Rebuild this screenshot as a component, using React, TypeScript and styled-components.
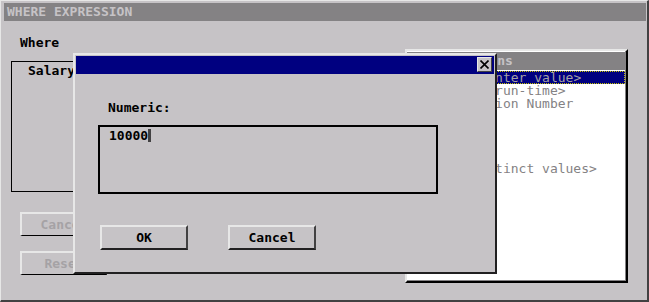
import React from 'react';
import styled, { createGlobalStyle } from 'styled-components';

const GlobalStyle = createGlobalStyle`
  body {
    margin: 0;
    background: #c6c3c6;
    font-family: 'DejaVu Sans Mono', 'Liberation Mono', monospace;
    font-size: 13px;
  }
`;

const columns = [
  { label: '<Enter value>', indent: 9, selected: true },
  { label: '<Ask at run-time>', indent: 3 },
  { label: 'Observation Number', indent: 3 },
  { label: '' },
  { label: '' },
  { label: '' },
  { label: '' },
  { label: '<Lookup distinct values>', indent: 0 },
];

const App: React.FC = () => {
  return (
    <>
      <GlobalStyle />
      <Window>
        <TitleBar>WHERE EXPRESSION</TitleBar>
        <Body>
          <LeftColumn>
            <Label>Where</Label>
            <ExpressionBox>
              <ExprText>Salary</ExprText>
            </ExpressionBox>
            <SideButtons>
              <SideButton disabled>Cancel</SideButton>
              <SideButton disabled>Reset</SideButton>
            </SideButtons>
          </LeftColumn>
          <ListPanel>
            <ListHeader>Columns</ListHeader>
            <ListItems>
              {columns.map((col, i) => (
                <ListItem key={i} $selected={!!col.selected} $indent={col.indent || 0}>
                  {col.label}
                </ListItem>
              ))}
            </ListItems>
          </ListPanel>
        </Body>

        <Dialog>
          <DialogTitle>
            <CloseButton aria-label="close">
              <svg width="9" height="9" viewBox="0 0 9 9">
                <path d="M0.5 0.5 L8.5 8.5 M8.5 0.5 L0.5 8.5" stroke="#000" strokeWidth="1.6" />
              </svg>
            </CloseButton>
          </DialogTitle>
          <DialogBody>
            <FieldLabel>Numeric:</FieldLabel>
            <InputBox>
              <InputText>10000</InputText>
              <Caret />
            </InputBox>
            <DialogButtons>
              <PushButton>OK</PushButton>
              <PushButton>Cancel</PushButton>
            </DialogButtons>
          </DialogBody>
        </Dialog>
      </Window>
    </>
  );
};

export default App;

const Window = styled.div`
  position: relative;
  width: 649px;
  height: 302px;
  box-sizing: border-box;
  border-top: 1px solid #e7e7e7;
  border-left: 1px solid #e7e7e7;
  border-right: 2px solid #424142;
  border-bottom: 2px solid #424142;
  background: #c6c3c6;
  display: flex;
  flex-direction: column;
`;

const TitleBar = styled.div`
  margin: 2px 1px 0 3px;
  height: 18px;
  line-height: 18px;
  padding-left: 3px;
  background: #848284;
  color: #c6c3c6;
  font-weight: bold;
  white-space: pre;
`;

const Body = styled.div`
  display: flex;
  align-items: flex-start;
  gap: 14px;
  padding: 14px 19px 0 10px;
`;

const LeftColumn = styled.div`
  width: 380px;
  display: flex;
  flex-direction: column;
`;

const Label = styled.div`
  margin-left: 9px;
  line-height: 15px;
  font-weight: bold;
  color: #000;
`;

const ExpressionBox = styled.div`
  margin-top: 11px;
  height: 131px;
  box-sizing: border-box;
  border: 1px solid #000;
  padding: 1px 16px;
`;

const ExprText = styled.div`
  line-height: 15px;
  font-weight: bold;
`;

const SideButtons = styled.div`
  margin: 20px 0 0 9px;
  display: flex;
  flex-direction: column;
  gap: 15px;
`;

const SideButton = styled.button`
  width: 87px;
  height: 24px;
  box-sizing: border-box;
  padding: 0;
  font: inherit;
  font-weight: bold;
  background: #c6c3c6;
  color: #a5a2a5;
  border-style: solid;
  border-width: 2px 1px 1px 2px;
  border-color: #e7e7e7 #424142 #000 #e7e7e7;
`;

const ListPanel = styled.div`
  margin-top: 14px;
  width: 223px;
  height: 234px;
  box-sizing: border-box;
  border-style: solid;
  border-width: 2px;
  border-color: #e7e7e7 #000 #000 #e7e7e7;
  background: #fff;
  box-shadow: inset -1px -1px 0 #848284;
  display: flex;
  flex-direction: column;
`;

const ListHeader = styled.div`
  margin-top: 1px;
  height: 18px;
  line-height: 18px;
  padding-left: 51px;
  margin-right: 1px;
  background: #848284;
  color: #c6c3c6;
  font-weight: bold;
`;

const ListItems = styled.div`
  padding-top: 1px;
  display: flex;
  flex-direction: column;
`;

const ListItem = styled.div<{ $selected: boolean; $indent: number }>`
  height: 13px;
  line-height: 13px;
  margin-right: 1px;
  box-sizing: border-box;
  padding-left: ${(p) => 2 + p.$indent * 7.83}px;
  white-space: pre;
  color: ${(p) => (p.$selected ? '#a5a2a5' : '#848284')};
  background: ${(p) => (p.$selected ? '#000080' : 'transparent')};
  outline: ${(p) => (p.$selected ? '1px dotted #c6c300' : 'none')};
  outline-offset: -1px;
`;

const Dialog = styled.div`
  position: absolute;
  left: 72px;
  top: 52px;
  width: 424px;
  height: 221px;
  box-sizing: border-box;
  border-style: solid;
  border-width: 2px;
  border-color: #e7e7e7 #212021 #212021 #e7e7e7;
  background: #c6c3c6;
  display: flex;
  flex-direction: column;
`;

const DialogTitle = styled.div`
  margin: 1px 1px 0 1px;
  height: 18px;
  box-sizing: border-box;
  padding: 1px 2px 0 0;
  background: #000080;
  display: flex;
  justify-content: flex-end;
  align-items: flex-start;
`;

const CloseButton = styled.div`
  width: 15px;
  height: 15px;
  box-sizing: border-box;
  border-style: solid;
  border-width: 1px;
  border-color: #e7e7e7 #424142 #424142 #e7e7e7;
  background: #c6c3c6;
  display: flex;
  align-items: center;
  justify-content: center;
`;

const DialogBody = styled.div`
  display: flex;
  flex-direction: column;
  padding: 26px 0 0 23px;
`;

const FieldLabel = styled.div`
  margin-left: 10px;
  line-height: 15px;
  font-weight: bold;
`;

const InputBox = styled.div`
  margin-top: 10px;
  width: 340px;
  height: 69px;
  box-sizing: border-box;
  border: 2px solid #000;
  padding: 1px 0 0 9px;
  display: flex;
  align-items: flex-start;
`;

const InputText = styled.span`
  line-height: 15px;
  font-weight: bold;
`;

const Caret = styled.span`
  width: 3px;
  height: 13px;
  margin-top: 1px;
  background: #424142;
`;

const DialogButtons = styled.div`
  margin: 31px 0 0 2px;
  display: flex;
  gap: 40px;
`;

const PushButton = styled.button`
  width: 88px;
  height: 25px;
  box-sizing: border-box;
  padding: 0;
  font: inherit;
  font-weight: bold;
  color: #000;
  background: #c6c3c6;
  border-style: solid;
  border-width: 2px 2px 2px 2px;
  border-color: #e7e7e7 #424142 #212021 #e7e7e7;
`;
